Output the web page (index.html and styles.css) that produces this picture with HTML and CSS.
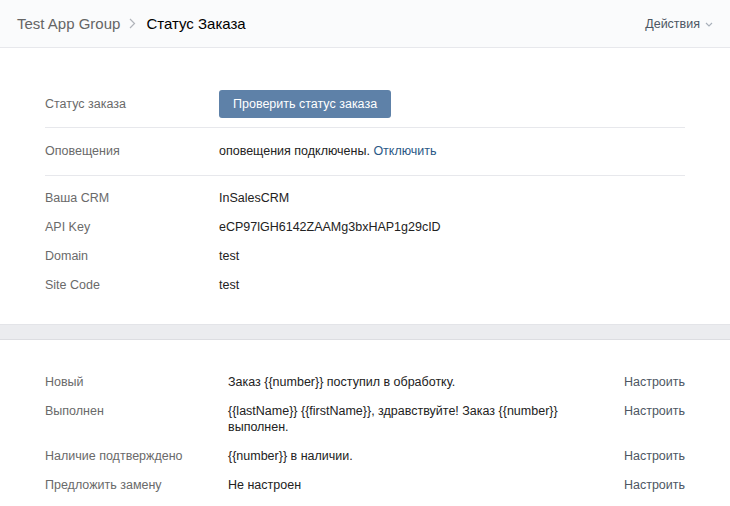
FILE: index.html
```html
<!DOCTYPE html>
<html lang="ru">
  <head>
    <meta charset="UTF-8" />
    <meta name="viewport" content="width=device-width, initial-scale=1.0" />
    <title>Статус Заказа</title>
    <link rel="stylesheet" href="styles.css">
  </head>
  <body>
    <header class="page-header">
      <div class="breadcrumbs">
        <span class="crumb-parent">Test App Group</span>
        <svg class="crumb-sep" width="7" height="11" viewBox="0 0 7 11">
          <path d="M1 1l4.5 4.5L1 10" fill="none" stroke="#b0b4ba" stroke-width="1.2" />
        </svg>
        <span class="crumb-current">Статус Заказа</span>
      </div>
      <div class="header-actions">
        Действия
        <svg class="actions-arrow" width="8" height="5" viewBox="0 0 8 5">
          <path d="M1 1l3 3 3-3" fill="none" stroke="#a8b0ba" stroke-width="1.1" />
        </svg>
      </div>
    </header>

    <section class="panel panel-settings">
      <div class="row row-button">
        <div class="row-label">Статус заказа</div>
        <div class="row-value"><button class="btn-primary">Проверить статус заказа</button></div>
      </div>
      <div class="row row-notify">
        <div class="row-label">Оповещения</div>
        <div class="row-value">оповещения подключены. <a class="link" href="#">Отключить</a></div>
      </div>
      <div class="info-group">
        <div class="row row-info">
          <div class="row-label">Ваша CRM</div>
          <div class="row-value">InSalesCRM</div>
        </div>
        <div class="row row-info">
          <div class="row-label">API Key</div>
          <div class="row-value">eCP97lGH6142ZAAMg3bxHAP1g29cID</div>
        </div>
        <div class="row row-info">
          <div class="row-label">Domain</div>
          <div class="row-value">test</div>
        </div>
        <div class="row row-info">
          <div class="row-label">Site Code</div>
          <div class="row-value">test</div>
        </div>
      </div>
    </section>

    <div class="panel-gap"></div>

    <section class="panel panel-templates">
      <div class="tpl-row">
        <div class="tpl-label">Новый</div>
        <div class="tpl-text">Заказ {{number}} поступил в обработку.</div>
        <a class="tpl-action" href="#">Настроить</a>
      </div>
      <div class="tpl-row">
        <div class="tpl-label">Выполнен</div>
        <div class="tpl-text">{{lastName}} {{firstName}}, здравствуйте! Заказ {{number}} выполнен.</div>
        <a class="tpl-action" href="#">Настроить</a>
      </div>
      <div class="tpl-row">
        <div class="tpl-label">Наличие подтверждено</div>
        <div class="tpl-text">{{number}} в наличии.</div>
        <a class="tpl-action" href="#">Настроить</a>
      </div>
      <div class="tpl-row">
        <div class="tpl-label">Предложить замену</div>
        <div class="tpl-text">Не настроен</div>
        <a class="tpl-action" href="#">Настроить</a>
      </div>
    </section>
  </body>
</html>
```

FILE: styles.css
```css
body {
  margin: 0;
  background-color: #ffffff;
  font-family: "Liberation Sans", Arial, sans-serif;
  font-size: 12.5px;
  color: #000;
}

a {
  text-decoration: none;
}

/* шапка */
.page-header {
  height: 47px;
  display: flex;
  align-items: center;
  justify-content: space-between;
  padding: 0 17px;
  background-color: #fafbfc;
  border-bottom: 1px solid #e7e8ec;
}
.breadcrumbs {
  display: flex;
  align-items: center;
  font-size: 15px;
}
.crumb-parent {
  color: #656565;
}
.crumb-sep {
  margin: 0 10px 0 9px;
}
.crumb-current {
  color: #000;
}
.header-actions {
  display: flex;
  align-items: center;
  font-size: 12.5px;
  color: #4c5663;
}
.actions-arrow {
  margin-left: 5px;
  margin-top: 1px;
}

/* настройки */
.panel {
  padding: 0 45px;
}
.panel-settings {
  padding-top: 33px;
  padding-bottom: 24px;
}
.row {
  display: flex;
  align-items: center;
  line-height: 17px;
}
.row-label {
  width: 174px;
  flex-shrink: 0;
  color: #6a6a6a;
}
.row-value {
  color: #222;
}
.row-button {
  padding: 9px 0;
  border-bottom: 1px solid #e7e8ec;
}
.row-notify {
  padding: 15px 0;
  border-bottom: 1px solid #e7e8ec;
}
.info-group {
  padding-top: 8px;
}
.row-info {
  padding: 6px 0;
}
.btn-primary {
  height: 28px;
  padding: 0 14px;
  border: none;
  border-radius: 3px;
  background-color: #5e81a8;
  color: #fff;
  font-family: inherit;
  font-size: 12.5px;
  cursor: pointer;
}
.link {
  color: #2a5885;
}

/* разделитель */
.panel-gap {
  height: 14px;
  background-color: #ebecef;
  border-top: 1px solid #e3e4e8;
  border-bottom: 1px solid #dcdde1;
}

/* шаблоны */
.panel-templates {
  padding-top: 27px;
}
.tpl-row {
  display: flex;
  align-items: flex-start;
  padding: 6.5px 0;
  line-height: 16px;
}
.tpl-label {
  width: 183px;
  flex-shrink: 0;
  color: #6a6a6a;
}
.tpl-text {
  width: 345px;
  color: #222;
}
.tpl-action {
  margin-left: auto;
  color: #4d5663;
}
```
